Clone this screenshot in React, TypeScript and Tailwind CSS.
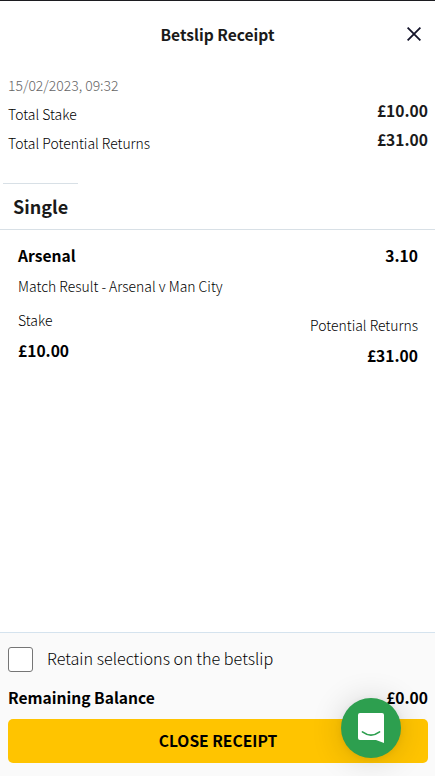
import React, { useState } from 'react';

interface AmountRowProps {
  label: string;
  value: string;
}

const AmountRow: React.FC<AmountRowProps> = ({ label, value }) => (
  <div className="flex h-[29px] items-start justify-between">
    <span className="pt-1 text-[13.95px] font-light leading-5 text-black">{label}</span>
    <span className="text-[15.6px] font-bold leading-5 text-[#1a1a1a]">{value}</span>
  </div>
);

const CloseIcon: React.FC = () => (
  <svg width="14" height="14" viewBox="0 0 14 14" fill="none" stroke="#14142a" strokeWidth="1.8">
    <path d="M0.6 0.6L13.4 13.4M13.4 0.6L0.6 13.4" />
  </svg>
);

const ChatIcon: React.FC = () => (
  <svg width="26" height="30" viewBox="0 0 26 30">
    <path fill="#fff" d="M2 0H24Q26 0 26 2V30L18 27H2Q0 27 0 25V2Q0 0 2 0Z" />
    <path d="M4.4 18.9Q13 25.3 21.6 18.9" fill="none" stroke="#2d9f4f" strokeWidth="1.6" strokeLinecap="round" />
  </svg>
);

const App: React.FC = () => {
  const [retain, setRetain] = useState(false);

  return (
    <div className="relative flex h-[776px] w-[435px] flex-col overflow-hidden border-t border-[#1c1c20] bg-white font-['Noto_Sans_CJK_SC','Noto_Sans',sans-serif] text-black">
      <header className="grid h-[67px] grid-cols-[1fr_auto_1fr] items-center px-[7px]">
        <h1 className="col-start-2 mb-0.5 text-[15.6px] font-bold leading-6 text-[#1a1a1a]">Betslip Receipt</h1>
        <button aria-label="Close" className="mb-[2px] justify-self-end pr-[7px]">
          <CloseIcon />
        </button>
      </header>

      <section className="pt-[7px] pr-[7px] pl-2">
        <p className="mb-[5px] text-[13.95px] font-light leading-5 text-[#666]">15/02/2023, 09:32</p>
        <AmountRow label="Total Stake" value="£10.00" />
        <AmountRow label="Total Potential Returns" value="£31.00" />
      </section>

      <section className="mt-[25px] h-[47px] border-b border-[#d8e0e6] pl-[3px]">
        <div className="w-[75px] border-t border-[#d8e0e6] pt-2 pl-[10px]">
          <h2 className="text-[18px] font-bold leading-7 text-[#1a1a1a]">Single</h2>
        </div>
      </section>

      <section className="grow pt-[15px] pr-[17px] pl-[18px]">
        <div className="flex justify-between text-[15.6px] font-bold leading-5">
          <span>Arsenal</span>
          <span>3.10</span>
        </div>
        <p className="mt-[11px] text-[13.95px] font-light leading-5 text-black">Match Result - Arsenal v Man City</p>
        <div className="mt-[14px] flex justify-between">
          <div className="flex flex-col gap-[10px]">
            <span className="text-[13.95px] font-light leading-5 text-black">Stake</span>
            <span className="text-[15.6px] font-bold leading-5">£10.00</span>
          </div>
          <div className="flex flex-col items-end gap-[10px] pt-[5px]">
            <span className="text-[13.95px] font-light leading-5 text-black">Potential Returns</span>
            <span className="text-[15.6px] font-bold leading-5">£31.00</span>
          </div>
        </div>
      </section>

      <footer className="h-[144px] shrink-0 border-t border-[#d5e3ee] bg-[#fafafa] pt-[14px] pr-[7px] pl-2">
        <label className="flex h-[25px] items-center gap-[14px]">
          <input
            type="checkbox"
            checked={retain}
            onChange={(e) => setRetain(e.target.checked)}
            className="size-[25px] appearance-none rounded-[3px] border border-[#767676] bg-white checked:bg-[#2d9f4f]"
          />
          <span className="pb-[3px] text-[16.2px] font-light leading-6">Retain selections on the betslip</span>
        </label>
        <div className="mt-[15px] flex justify-between text-[15.6px] font-bold leading-5">
          <span>Remaining Balance</span>
          <span>£0.00</span>
        </div>
        <button className="mt-3 block h-[44px] w-full rounded-[5px] bg-[#ffc400] pb-[3px] text-[15.6px] font-bold leading-5">
          CLOSE RECEIPT
        </button>
      </footer>

      <button
        aria-label="Open chat"
        className="absolute right-[34px] bottom-[18px] flex size-[60px] items-center justify-center rounded-full bg-[#2d9f4f] shadow-[0_1px_6px_0_rgba(0,0,0,0.06),0_2px_32px_0_rgba(0,0,0,0.16)]"
      >
        <ChatIcon />
      </button>
    </div>
  );
};

export default App;
